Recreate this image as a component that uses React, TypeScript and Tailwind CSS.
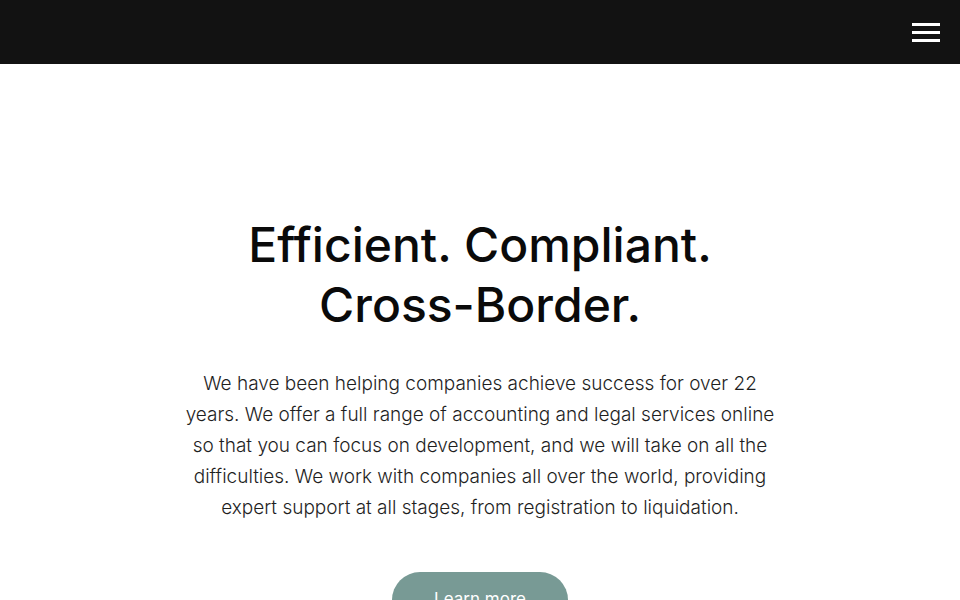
import React from 'react'

export default function App() {
  return (
    <div className="min-h-screen bg-white font-['Inter','Noto_Sans',sans-serif] overflow-hidden h-[600px]">
      {/* Header */}
      <header className="h-16 bg-[#121212] flex items-center justify-end px-5">
        <button aria-label="Menu" className="flex flex-col gap-[5px] w-7">
          <span className="block h-[3px] w-7 bg-white" />
          <span className="block h-[3px] w-7 bg-white" />
          <span className="block h-[3px] w-7 bg-white" />
        </button>
      </header>

      {/* Hero */}
      <section className="flex flex-col items-center text-center pt-[151px]">
        <h1 className="text-[48px] leading-[60px] font-medium text-[#0a0a0a] tracking-normal">
          Efficient. Compliant.
          <br />
          Cross-Border.
        </h1>
        <p className="mt-[33px] max-w-[600px] text-[19px] leading-[31px] text-[#1f1f1f] font-light">
          We have been helping companies achieve success for over 22 years. We offer a full range of
          accounting and legal services online so that you can focus on development, and we will take
          on all the difficulties. We work with companies all over the world, providing expert support
          at all stages, from registration to liquidation.
        </p>
        <a
          href="#"
          className="mt-[49px] w-[176px] h-14 rounded-full bg-[#789a95] text-white text-[17px] flex items-center justify-center"
        >
          Learn more
        </a>
      </section>
    </div>
  )
}
